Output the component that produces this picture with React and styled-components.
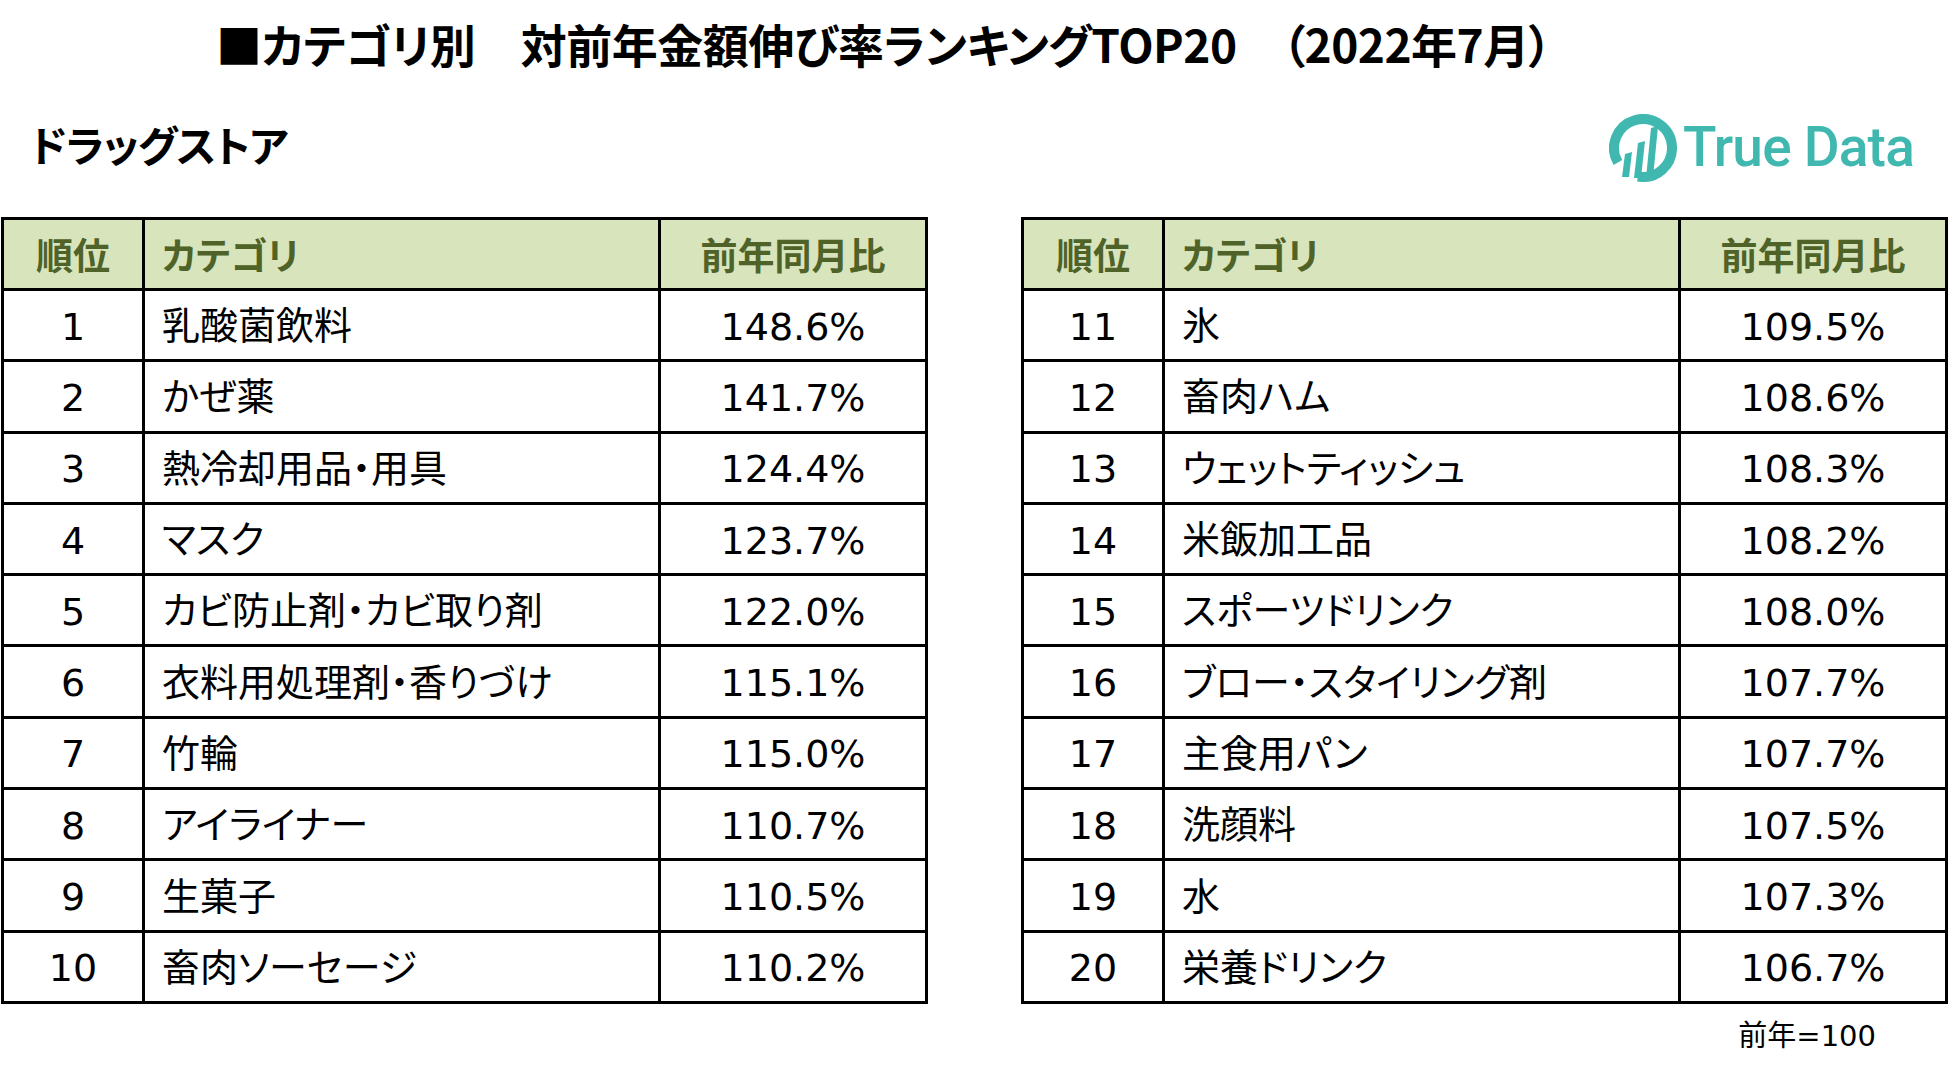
import React from 'react';
import styled, { createGlobalStyle } from 'styled-components';

const leftRows = [
  { rank: 1, name: '乳酸菌飲料', ratio: '148.6%' },
  { rank: 2, name: 'かぜ薬', ratio: '141.7%' },
  { rank: 3, name: '熱冷却用品・用具', ratio: '124.4%' },
  { rank: 4, name: 'マスク', ratio: '123.7%' },
  { rank: 5, name: 'カビ防止剤・カビ取り剤', ratio: '122.0%' },
  { rank: 6, name: '衣料用処理剤・香りづけ', ratio: '115.1%' },
  { rank: 7, name: '竹輪', ratio: '115.0%' },
  { rank: 8, name: 'アイライナー', ratio: '110.7%' },
  { rank: 9, name: '生菓子', ratio: '110.5%' },
  { rank: 10, name: '畜肉ソーセージ', ratio: '110.2%' },
];

const rightRows = [
  { rank: 11, name: '氷', ratio: '109.5%' },
  { rank: 12, name: '畜肉ハム', ratio: '108.6%' },
  { rank: 13, name: 'ウェットティッシュ', ratio: '108.3%' },
  { rank: 14, name: '米飯加工品', ratio: '108.2%' },
  { rank: 15, name: 'スポーツドリンク', ratio: '108.0%' },
  { rank: 16, name: 'ブロー・スタイリング剤', ratio: '107.7%' },
  { rank: 17, name: '主食用パン', ratio: '107.7%' },
  { rank: 18, name: '洗顔料', ratio: '107.5%' },
  { rank: 19, name: '水', ratio: '107.3%' },
  { rank: 20, name: '栄養ドリンク', ratio: '106.7%' },
];

const GlobalStyle = createGlobalStyle`
  body {
    margin: 0;
    background: #ffffff;
    font-family: "Noto Sans CJK JP", sans-serif;
  }
`;

const RankingTable = ({ rows }) => (
  <Table>
    <HeadCell>順位</HeadCell>
    <HeadCell $left>カテゴリ</HeadCell>
    <HeadCell>前年同月比</HeadCell>
    {rows.map((row) => (
      <Row key={row.rank}>
        <Cell $num>{row.rank}</Cell>
        <Cell $left>{row.name}</Cell>
        <Cell $num>{row.ratio}</Cell>
      </Row>
    ))}
  </Table>
);

const TrueDataLogo = () => (
  <Logo>
    <svg width="68" height="68" viewBox="0 0 68 68">
      <path
        d="M 8.9 48.5 A 29 29 0 1 1 28.96 62.56"
        fill="none"
        stroke="#40b8b0"
        strokeWidth="10"
      />
      <polygon points="13,63 20,63 23,38 16,40" fill="#40b8b0" />
      <polygon points="25,64 32,64 36,27 29,29" fill="#40b8b0" />
      <polygon points="37,64 44,64 49,12 42,14" fill="#40b8b0" />
    </svg>
    <LogoText>True Data</LogoText>
  </Logo>
);

const App = () => {
  return (
    <Page>
      <GlobalStyle />
      <Title>■カテゴリ別　対前年金額伸び率ランキングTOP20　（2022年7月）</Title>
      <SubHeader>
        <Channel>ドラッグストア</Channel>
        <TrueDataLogo />
      </SubHeader>
      <Tables>
        <RankingTable rows={leftRows} />
        <RankingTable rows={rightRows} />
      </Tables>
      <Note>前年=100</Note>
    </Page>
  );
};

const Page = styled.div`
  width: 1950px;
  height: 1071px;
  overflow: hidden;
  background: #ffffff;
  color: #000000;
`;

const Title = styled.h1`
  margin: 0;
  padding: 20px 0 0 216px;
  font-size: 46px;
  line-height: 46px;
  font-weight: 700;
  letter-spacing: -0.5px;
  font-feature-settings: "palt";
  white-space: nowrap;
`;

const SubHeader = styled.div`
  display: flex;
  align-items: center;
  justify-content: space-between;
  height: 151px;
  padding: 4px 36px 0 30px;
  box-sizing: border-box;
`;

const Channel = styled.div`
  font-size: 42px;
  font-weight: 700;
  letter-spacing: -1px;
  font-feature-settings: "palt";
`;

const Logo = styled.div`
  display: flex;
  align-items: center;
  gap: 6px;
  margin-top: 8px;
`;

const LogoText = styled.span`
  font-family: Roboto, "Liberation Sans", sans-serif;
  font-size: 55px;
  font-weight: 500;
  letter-spacing: -0.8px;
  color: #40b8b0;
  line-height: 1;
`;

const Tables = styled.div`
  display: flex;
  gap: 93px;
  padding-left: 1px;
`;

const Table = styled.div`
  display: grid;
  grid-template-columns: 138px 513px 264px;
  grid-template-rows: 68px repeat(10, 68.3px);
  gap: 3px;
  padding: 3px;
  background: #000000;
`;

const Row = styled.div`
  display: contents;
`;

const HeadCell = styled.div`
  display: flex;
  align-items: center;
  justify-content: ${(p) => (p.$left ? 'flex-start' : 'center')};
  padding-left: ${(p) => (p.$left ? '17px' : '0')};
  background: #d8e4bc;
  color: #4f6228;
  font-size: 37px;
  font-weight: 700;
  font-feature-settings: "palt";
`;

const Cell = styled.div`
  display: flex;
  align-items: center;
  justify-content: ${(p) => (p.$left ? 'flex-start' : 'center')};
  padding-left: ${(p) => (p.$left ? '17px' : '0')};
  padding-top: ${(p) => (p.$num ? '8px' : '0')};
  padding-bottom: 5px;
  box-sizing: border-box;
  background: #ffffff;
  font-family: "DejaVu Sans", "Noto Sans CJK JP", sans-serif;
  font-size: 38px;
  font-feature-settings: "palt";
  white-space: nowrap;
`;

const Note = styled.div`
  display: flex;
  justify-content: flex-end;
  margin-top: 14px;
  padding-right: 74px;
  font-family: "DejaVu Sans", "Noto Sans CJK JP", sans-serif;
  font-size: 29px;
  line-height: 36px;
`;

export default App;
